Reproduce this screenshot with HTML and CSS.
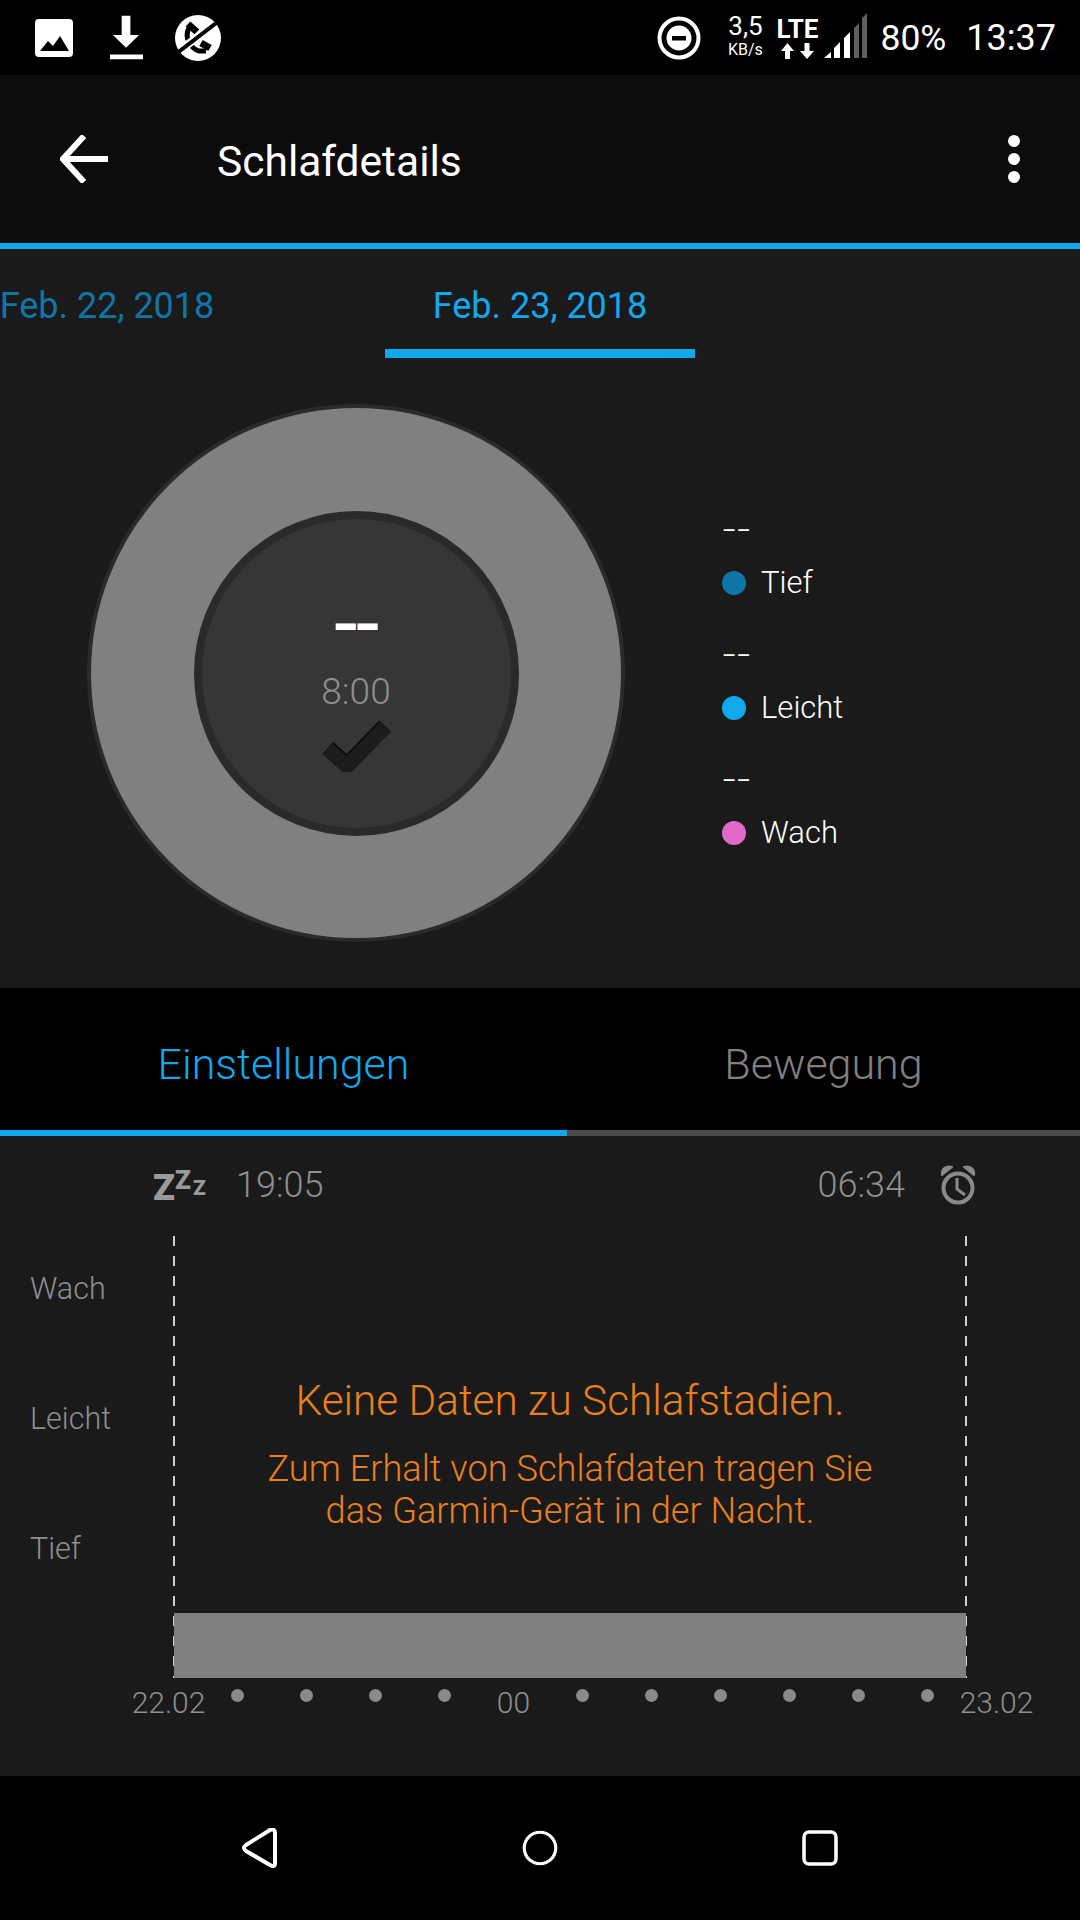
FILE: index.html
```html
<!DOCTYPE html>
<html lang="de">
<head>
<meta charset="utf-8">
<title>Schlafdetails</title>
<link rel="stylesheet" href="styles.css">
</head>
<body>
<div class="screen">
  <header class="status">
    <div class="status-left">
      <svg class="ic-image" viewBox="0 0 38 38"><rect width="38" height="38" rx="4" fill="#fff"/><path d="M5 32 L13 22 L18 27 L25 17 L34 32 Z" fill="#000"/></svg>
      <svg class="ic-download" viewBox="0 0 34 46"><path d="M12 0 H21 V20 H30 L16.500 33 L3 20 H12 Z M0 40 H34 V45 H0 Z" fill="#fff"/></svg>
      <svg class="ic-call" viewBox="0 0 46 46"><circle cx="23" cy="23" r="23" fill="#fff"/><path d="M14 13 C9 22 15 33 24 36 L31 36" fill="none" stroke="#000" stroke-width="5"/><path d="M13 9 L22 17 M26 28 L35 33" stroke="#000" stroke-width="7"/><path d="M7 34 L39 9" stroke="#fff" stroke-width="8"/><path d="M1 39 L45 5" stroke="#000" stroke-width="4"/></svg>
    </div>
    <div class="status-right">
      <svg class="ic-dnd" viewBox="0 0 44 44"><circle cx="22" cy="22" r="19.500" fill="none" stroke="#fff" stroke-width="4"/><circle cx="22" cy="22" r="12.500" fill="#fff"/><rect x="15" y="20" width="14" height="4.500" fill="#000"/></svg>
      <div class="speed"><span class="speed-val">3,5</span><span class="speed-unit">KB/s</span></div>
      <div class="net">
        <span class="lte">LTE</span>
        <svg class="ic-arrows" viewBox="0 0 33 16"><path d="M4 16 V8 H0 L6.500 0 L13 8 H9 V16 Z M23.500 0 H28.500 V8 H33 L26 16 L19 8 H23.500 Z" fill="#fff"/></svg>
      </div>
      <svg class="ic-signal" viewBox="0 0 44 46"><path d="M0 45 L7 39 V45 Z M10 35 L16 29 V45 H10 Z M20 25 L26 19 V45 H20 Z" fill="#fff"/><path d="M30 15 L35 10 V45 H30 Z M38 5 L43 0 V45 H38 Z" fill="#5e5e5e"/></svg>
      <span class="battery">80%</span>
      <span class="clock">13:37</span>
    </div>
  </header>

  <nav class="appbar">
    <svg class="ic-back" viewBox="0 0 48 48"><path d="M48 24 H3 M24 1 L3 24 L24 47" fill="none" stroke="#fff" stroke-width="6"/></svg>
    <h1 class="title">Schlafdetails</h1>
    <div class="menu"><i></i><i></i><i></i></div>
  </nav>

  <section class="summary">
    <div class="dates">
      <div class="date date-prev">Feb. 22, 2018</div>
      <div class="date date-active">Feb. 23, 2018</div>
      <div class="date"></div>
    </div>
    <div class="overview">
      <div class="ring">
        <div class="dial">
          <span class="dial-dash">––</span>
          <span class="dial-goal">8:00</span>
          <svg class="ic-check" viewBox="0 0 68 54"><path d="M6 30 L25 47 L63 8" fill="none" stroke="#0a0a0a" stroke-width="16" stroke-linejoin="round"/><path d="M6 31 L25 48 L63 9" fill="none" stroke="#1c1c1c" stroke-width="14" stroke-linejoin="round"/></svg>
        </div>
      </div>
      <ul class="legend">
        <li class="legend-item"><span class="legend-val">––</span><span class="legend-key"><i class="dot dot-deep"></i>Tief</span></li>
        <li class="legend-item"><span class="legend-val">––</span><span class="legend-key"><i class="dot dot-light"></i>Leicht</span></li>
        <li class="legend-item"><span class="legend-val">––</span><span class="legend-key"><i class="dot dot-awake"></i>Wach</span></li>
      </ul>
    </div>
  </section>

  <div class="tabs">
    <div class="tab tab-active">Einstellungen</div>
    <div class="tab">Bewegung</div>
  </div>
  <div class="tab-line"><div class="tab-line-on"></div></div>

  <section class="detail">
    <div class="times">
      <div class="time-group">
        <svg class="ic-zzz" viewBox="0 0 54 44"><text x="0" y="37" class="z z1">Z</text><text x="22" y="26" class="z z2">Z</text><text x="40" y="32" class="z z3">Z</text></svg>
        <span>19:05</span>
      </div>
      <div class="time-group">
        <span>06:34</span>
        <svg class="ic-alarm" viewBox="0 0 36 42"><path d="M2 11 C1 5 6 1 12 3 Z M34 11 C35 5 30 1 24 3 Z" fill="#8a8a8a" stroke="#8a8a8a" stroke-width="2" stroke-linejoin="round"/><circle cx="18" cy="24" r="14.500" fill="none" stroke="#8a8a8a" stroke-width="4"/><path d="M17 14 V25 L25 31" fill="none" stroke="#8a8a8a" stroke-width="3"/></svg>
      </div>
    </div>
    <div class="chart">
      <div class="stages"><span>Wach</span><span>Leicht</span><span>Tief</span></div>
      <div class="plot">
        <div class="message">
          <p class="msg-main">Keine Daten zu Schlafstadien.</p>
          <p class="msg-sub">Zum Erhalt von Schlafdaten tragen Sie<br>das Garmin-Gerät in der Nacht.</p>
        </div>
        <div class="bar"></div>
      </div>
    </div>
    <div class="axis">
      <span>22.02</span><i></i><i></i><i></i><i></i><span>00</span><i></i><i></i><i></i><i></i><i></i><i></i><span>23.02</span>
    </div>
  </section>

  <footer class="navbar">
    <svg class="ic-nav" viewBox="0 0 36 40"><path d="M4 17 L28 2 Q33 0 33 5 V35 Q33 40 28 37 L4 23 Q0 20 4 17 Z" fill="none" stroke="#fff" stroke-width="4" stroke-linejoin="round"/></svg>
    <svg class="ic-nav" viewBox="0 0 40 40"><circle cx="20" cy="20" r="17.500" fill="none" stroke="#fff" stroke-width="3.500"/></svg>
    <svg class="ic-nav" viewBox="0 0 36 36"><rect x="2" y="2" width="32" height="32" rx="5" fill="none" stroke="#fff" stroke-width="3.500"/></svg>
  </footer>
</div>
</body>
</html>
```
FILE: styles.css
```css
* { box-sizing: border-box; }
html, body { margin: 0; padding: 0; background: #000; }
body { font-family: Roboto, "Noto Sans", sans-serif; color: #fff; }
.screen { width: 1080px; height: 1920px; display: flex; flex-direction: column; overflow: hidden; }

.status { height: 75px; flex: none; background: #000; display: flex; justify-content: space-between; align-items: center; padding: 0 24px 0 35px; }
.status-left { display: flex; align-items: center; }
.ic-image { width: 38px; height: 38px; margin-right: 37px; }
.ic-download { width: 33px; height: 46px; margin-right: 32px; }
.ic-call { width: 46px; height: 46px; }
.status-right { display: flex; align-items: center; }
.ic-dnd { width: 44px; height: 44px; margin-right: 24px; }
.speed { display: flex; flex-direction: column; align-items: center; margin: -6px 11px 0 0; width: 40px; }
.speed-val { font-size: 26px; line-height: 30px; }
.speed-unit { font-size: 16px; line-height: 17px; }
.net { display: flex; flex-direction: column; align-items: center; width: 42px; margin-right: 6px; }
.lte { font-size: 26px; line-height: 26px; font-weight: 700; }
.ic-arrows { width: 33px; height: 16px; margin-top: 1px; }
.ic-signal { width: 44px; height: 46px; margin-right: 12px; margin-top: -4px; }
.battery { font-size: 35.500px; margin-right: 20px; }
.clock { font-size: 36px; font-weight: 400; }

.appbar { height: 168px; flex: none; background: #0c0c0c; display: flex; align-items: flex-start; padding: 60px 60px 0 60px; }
.ic-back { width: 48px; height: 48px; flex: none; }
.title { margin: -5px auto 0 109px; font-size: 42.500px; font-weight: 400; line-height: 64px; }
.menu { display: flex; flex-direction: column; gap: 6px; }
.menu i { width: 12px; height: 12px; border-radius: 50%; background: #fff; }

.summary { height: 745px; flex: none; background: #1a1a1a; border-top: 6px solid #12a8ec; }
.dates { display: flex; justify-content: center; gap: 123px; height: 109px; overflow: hidden; }
.date { width: 310px; flex: none; text-align: center; font-size: 36px; line-height: 114px; height: 109px; }
.date-prev { color: #0f76a9; }
.date-active { color: #12a8ec; border-bottom: 9px solid #12a8ec; }

.overview { display: flex; align-items: center; padding: 46px 0 0 87px; }
.ring { width: 538px; height: 538px; border-radius: 50%; background: #808080; border: 4px solid #2a2a2a; display: flex; align-items: center; justify-content: center; flex: none; }
.dial { width: 325px; height: 325px; border-radius: 50%; background: #363636; border: 8px solid #2a2a2a; display: flex; flex-direction: column; align-items: center; }
.dial-dash { font-size: 35px; font-weight: 900; line-height: 44px; margin-top: 87px; -webkit-text-stroke: 2px #fff; }
.dial-goal { font-size: 37px; font-weight: 300; color: #8f8f8f; line-height: 42px; margin-top: 21.500px; }
.ic-check { width: 68px; height: 54px; margin-top: 4.500px; }

.legend { list-style: none; margin: 18px 0 0 97px; padding: 0; display: flex; flex-direction: column; gap: 31px; }
.legend-item { display: flex; flex-direction: column; }
.legend-val { font-size: 22px; font-weight: 400; line-height: 42px; height: 52px; }
.legend-key { display: flex; align-items: center; font-size: 31px; line-height: 42px; font-weight: 300; }
.dot { width: 24px; height: 24px; border-radius: 50%; margin-right: 15px; }
.dot-deep { background: #0f76a9; }
.dot-light { background: #12a8ec; }
.dot-awake { background: #e06ac9; }

.tabs { height: 142px; flex: none; background: #000; display: grid; grid-template-columns: 567px 513px; }
.tab { text-align: center; font-size: 43px; font-weight: 300; line-height: 152px; color: #808080; }
.tab-active { color: #12a8ec; }
.tab-line { height: 6px; flex: none; background: #4a4a4a; }
.tab-line-on { width: 567px; height: 6px; background: #12a8ec; }

.detail { height: 640px; flex: none; background: #1a1a1a; }
.times { height: 100px; display: flex; justify-content: space-between; align-items: center; padding: 0 104px 2px 153px; font-size: 36px; font-weight: 300; color: #8f8f8f; }
.time-group { display: flex; align-items: center; }
.ic-zzz { width: 54px; height: 44px; margin-right: 29px; overflow: visible; }
.z { font-family: Roboto, sans-serif; font-weight: 900; fill: #9a9a9a; }
.z1 { font-size: 36px; }
.z2 { font-size: 26px; }
.z3 { font-size: 21px; }
.ic-alarm { width: 36px; height: 42px; margin-left: 35px; }

.chart { display: flex; height: 442px; }
.stages { width: 173px; padding: 32px 0 0 30px; display: flex; flex-direction: column; gap: 88px; font-size: 30.500px; font-weight: 300; line-height: 42px; color: #8f8f8f; }
.plot { width: 794px; display: flex; flex-direction: column; justify-content: space-between; background-image: repeating-linear-gradient(#d0d0d0 0 10px, transparent 10px 20px), repeating-linear-gradient(#d0d0d0 0 10px, transparent 10px 20px); background-size: 2px 100%, 2px 100%; background-position: left top, right top; background-repeat: no-repeat; }
.message { text-align: center; color: #e9801e; padding-top: 138px; font-weight: 300; }
.msg-main { margin: 0 0 20px; font-size: 42.300px; line-height: 54px; }
.msg-sub { margin: 0; font-size: 36.200px; line-height: 42px; }
.bar { height: 65px; margin: 0 1px; background: #808080; }

.axis { display: grid; grid-template-columns: repeat(13, 69px); justify-items: center; margin-left: 134px; font-size: 30px; font-weight: 300; color: #8f8f8f; line-height: 50px; }
.axis i { width: 13px; height: 13px; border-radius: 50%; background: #8a8a8a; margin-top: 11px; }

.navbar { height: 144px; flex: none; background: #000; display: flex; align-items: center; justify-content: center; }
.ic-nav { width: 36px; height: 40px; margin: 0 122px; }
```
